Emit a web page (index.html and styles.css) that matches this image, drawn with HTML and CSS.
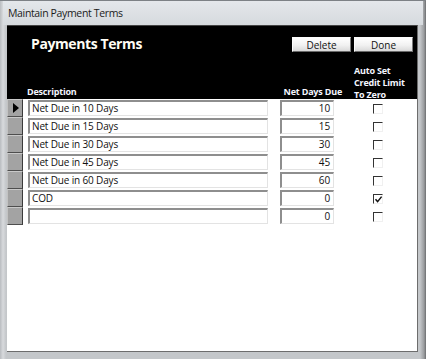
FILE: index.html
```html
<!DOCTYPE html>
<html>
<head>
<meta charset="utf-8">
<link rel="stylesheet" href="styles.css">
</head>
<body>
<div class="window">
  <div class="titlebar">Maintain Payment Terms</div>
  <div class="client">
    <div class="header">
      <div class="top">
        <div class="title">Payments Terms</div>
        <div class="buttons">
          <button class="btn">Delete</button>
          <button class="btn">Done</button>
        </div>
      </div>
      <div class="labels">
        <div class="lbl-desc">Description</div>
        <div class="lbl-net">Net Days Due</div>
        <div class="lbl-auto">Auto Set<br>Credit Limit<br>To Zero</div>
      </div>
    </div>
    <div class="rows">
      <div class="row">
        <div class="sel current"><span class="arrow"></span></div>
        <div class="box desc">Net Due in 10 Days</div>
        <div class="box net">10</div>
        <div class="check"></div>
      </div>
      <div class="row">
        <div class="sel"></div>
        <div class="box desc">Net Due in 15 Days</div>
        <div class="box net">15</div>
        <div class="check"></div>
      </div>
      <div class="row">
        <div class="sel"></div>
        <div class="box desc">Net Due in 30 Days</div>
        <div class="box net">30</div>
        <div class="check"></div>
      </div>
      <div class="row">
        <div class="sel"></div>
        <div class="box desc">Net Due in 45 Days</div>
        <div class="box net">45</div>
        <div class="check"></div>
      </div>
      <div class="row">
        <div class="sel"></div>
        <div class="box desc">Net Due in 60 Days</div>
        <div class="box net">60</div>
        <div class="check"></div>
      </div>
      <div class="row">
        <div class="sel"></div>
        <div class="box desc">COD</div>
        <div class="box net">0</div>
        <div class="check checked"><svg width="9" height="9" viewBox="0 0 9 9"><path d="M1.5 4.2 L3.6 6.6 L7.6 1.6" fill="none" stroke="#111" stroke-width="1.5"/></svg></div>
      </div>
      <div class="row">
        <div class="sel"></div>
        <div class="box desc"></div>
        <div class="box net">0</div>
        <div class="check"></div>
      </div>
    </div>
  </div>
</div>
</body>
</html>
```
FILE: styles.css
```css
* { box-sizing: border-box; }
html, body { margin: 0; padding: 0; }
body {
  width: 426px;
  height: 359px;
  overflow: hidden;
  background: #c9ccd0;
  font-family: "Open Sans", "DejaVu Sans", sans-serif;
}
.window {
  width: 426px;
  height: 359px;
  background: linear-gradient(to right, #b9bcc0 0px, #d8dadd 3px, #c4c7ca 6px, #c4c7ca 420px, #9a9c9f 424px, #6c6e70 426px);
  border-top: 1px solid #7d8186;
  display: flex;
  flex-direction: column;
}
.titlebar {
  height: 24px;
  padding: 5px 0 0 5px;
  margin: 0 3px;
  font-size: 10.5px;
  letter-spacing: -0.35px;
  color: #1b1b1b;
  background: linear-gradient(to bottom, #e4e7eb, #d6dade);
}
.client {
  margin-left: 7px;
  width: 411px;
  height: 327px;
  background: #fff;
  border-top: 1px solid #444;
  border-right: 1px solid #6d6d6d;
  border-bottom: 1px solid #6d6d6d;
}
.header {
  height: 73px;
  background: #000;
  color: #fff;
  display: flex;
  flex-direction: column;
  justify-content: space-between;
}
.top {
  display: flex;
  justify-content: space-between;
  align-items: flex-start;
  padding: 8px 4px 0 24px;
}
.title {
  font-size: 14px;
  font-weight: 700;
  letter-spacing: -0.4px;
  color: #fffdf4;
}
.buttons {
  display: flex;
  gap: 3px;
  padding-top: 3px;
}
.btn {
  width: 59px;
  height: 15px;
  padding: 0;
  margin: 0;
  font-family: "Open Sans", sans-serif;
  font-size: 10px;
  line-height: 12px;
  color: #111;
  background: linear-gradient(to bottom, #ffffff 0%, #f1f1f1 55%, #d9d9d9 100%);
  border: 1px solid;
  border-color: #fdfdfd #7b7b7b #6a6a6a #fdfdfd;
}
.labels {
  display: grid;
  grid-template-columns: 20px 253px 61px 13px auto;
  align-items: end;
  font-size: 9px;
  font-weight: 700;
  letter-spacing: -0.2px;
  line-height: 12px;
  color: #f4f6ff;
  height: 40px;
}
.lbl-desc { grid-column: 2; margin-bottom: 1px; }
.lbl-net { grid-column: 3; text-align: right; margin-right: -1px; margin-bottom: 1px; white-space: nowrap; }
.lbl-auto { grid-column: 5; margin-bottom: -2px; }
.rows {
  display: flex;
  flex-direction: column;
}
.row {
  height: 18px;
  display: grid;
  grid-template-columns: 16px 240px 61px 10px;
  column-gap: 5px;
  align-items: stretch;
}
.row > .net { margin-left: 7px; }
.row > .check { margin-left: 34px; }
.sel {
  background: #a3a3a3;
  border-top: 1px solid #c9c9c9;
  border-left: 1px solid #c2c2c2;
  border-right: 1px solid #3b3b3b;
  border-bottom: 1px solid #4e4e4e;
  display: flex;
  align-items: center;
  justify-content: center;
}
.arrow {
  width: 0;
  height: 0;
  border-top: 5px solid transparent;
  border-bottom: 5px solid transparent;
  border-left: 6px solid #000;
  margin-left: 1px;
}
.box {
  margin-top: 1px;
  margin-bottom: 1px;
  background: #fff;
  border-top: 2px solid #8e8e8e;
  border-left: 2px solid #8e8e8e;
  border-right: 1px solid #e3e3e3;
  border-bottom: 1px solid #e3e3e3;
  font-size: 10px;
  letter-spacing: -0.15px;
  line-height: 13px;
  color: #111;
  padding: 0 2px;
  white-space: nowrap;
  overflow: hidden;
}
.net { text-align: right; padding-right: 3px; }
.check {
  width: 10px;
  height: 10px;
  margin-top: 5px;
  border-top: 1px solid #333;
  border-left: 1px solid #333;
  border-right: 1px solid #f0f0f0;
  border-bottom: 1px solid #f0f0f0;
  position: relative;
}
.check svg { position: absolute; left: 0; top: 0; }
```
